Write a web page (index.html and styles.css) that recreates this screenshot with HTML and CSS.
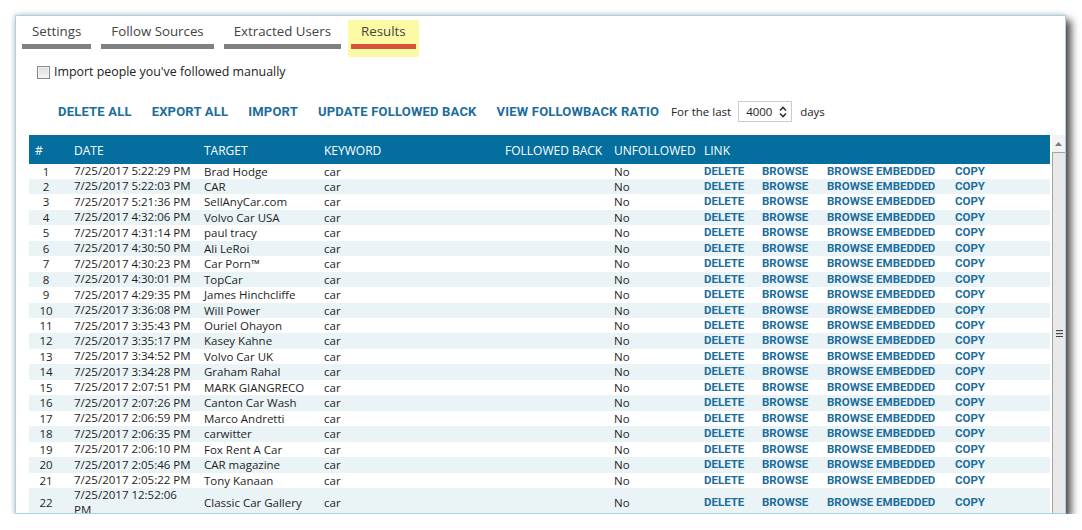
FILE: index.html
```html
<!DOCTYPE html>
<html>
<head>
<meta charset="utf-8">
<link rel="stylesheet" href="styles.css">
</head>
<body>
<div class="window">
  <div class="tabs">
    <div class="tab"><span class="tab-label">Settings</span><span class="tab-bar"></span></div>
    <div class="tab"><span class="tab-label">Follow Sources</span><span class="tab-bar"></span></div>
    <div class="tab"><span class="tab-label">Extracted Users</span><span class="tab-bar"></span></div>
    <div class="tab active"><span class="tab-label">Results</span><span class="tab-bar"></span></div>
  </div>
  <label class="option"><span class="checkbox"></span>Import people you've followed manually</label>
  <div class="toolbar">
    <span class="action">Delete All</span>
    <span class="action">Export All</span>
    <span class="action">Import</span>
    <span class="action">Update Followed Back</span>
    <span class="action last">View Followback Ratio</span>
    <span class="label">For the last</span>
    <span class="spin"><span class="spin-value">4000</span><svg class="spin-arrows" width="8" height="14" viewBox="0 0 8 14"><path d="M1 5.5 L4 2.5 L7 5.5" fill="none" stroke="#333" stroke-width="1.6"/><path d="M1 8.5 L4 11.5 L7 8.5" fill="none" stroke="#333" stroke-width="1.6"/></svg></span>
    <span class="label">days</span>
  </div>
  <div class="grid-area">
    <div class="table-wrap">
      <table class="results">
        <colgroup>
          <col class="c-num"><col class="c-date"><col class="c-target"><col class="c-keyword"><col class="c-fb"><col class="c-unf"><col class="c-del"><col class="c-browse"><col class="c-emb"><col class="c-copy">
        </colgroup>
        <thead>
          <tr><th class="h-num">#</th><th>DATE</th><th>TARGET</th><th>KEYWORD</th><th>FOLLOWED BACK</th><th>UNFOLLOWED</th><th>LINK</th><th></th><th></th><th></th></tr>
        </thead>
        <tbody>
          <tr><td class="num">1</td><td class="date">7/25/2017 5:22:29 PM</td><td>Brad Hodge</td><td>car</td><td></td><td>No</td><td class="lk">DELETE</td><td class="lk">BROWSE</td><td class="lk">BROWSE EMBEDDED</td><td class="lk">COPY</td></tr>
          <tr><td class="num">2</td><td class="date">7/25/2017 5:22:03 PM</td><td>CAR</td><td>car</td><td></td><td>No</td><td class="lk">DELETE</td><td class="lk">BROWSE</td><td class="lk">BROWSE EMBEDDED</td><td class="lk">COPY</td></tr>
          <tr><td class="num">3</td><td class="date">7/25/2017 5:21:36 PM</td><td>SellAnyCar.com</td><td>car</td><td></td><td>No</td><td class="lk">DELETE</td><td class="lk">BROWSE</td><td class="lk">BROWSE EMBEDDED</td><td class="lk">COPY</td></tr>
          <tr><td class="num">4</td><td class="date">7/25/2017 4:32:06 PM</td><td>Volvo Car USA</td><td>car</td><td></td><td>No</td><td class="lk">DELETE</td><td class="lk">BROWSE</td><td class="lk">BROWSE EMBEDDED</td><td class="lk">COPY</td></tr>
          <tr><td class="num">5</td><td class="date">7/25/2017 4:31:14 PM</td><td>paul tracy</td><td>car</td><td></td><td>No</td><td class="lk">DELETE</td><td class="lk">BROWSE</td><td class="lk">BROWSE EMBEDDED</td><td class="lk">COPY</td></tr>
          <tr><td class="num">6</td><td class="date">7/25/2017 4:30:50 PM</td><td>Ali LeRoi</td><td>car</td><td></td><td>No</td><td class="lk">DELETE</td><td class="lk">BROWSE</td><td class="lk">BROWSE EMBEDDED</td><td class="lk">COPY</td></tr>
          <tr><td class="num">7</td><td class="date">7/25/2017 4:30:23 PM</td><td>Car Porn™</td><td>car</td><td></td><td>No</td><td class="lk">DELETE</td><td class="lk">BROWSE</td><td class="lk">BROWSE EMBEDDED</td><td class="lk">COPY</td></tr>
          <tr><td class="num">8</td><td class="date">7/25/2017 4:30:01 PM</td><td>TopCar</td><td>car</td><td></td><td>No</td><td class="lk">DELETE</td><td class="lk">BROWSE</td><td class="lk">BROWSE EMBEDDED</td><td class="lk">COPY</td></tr>
          <tr><td class="num">9</td><td class="date">7/25/2017 4:29:35 PM</td><td>James Hinchcliffe</td><td>car</td><td></td><td>No</td><td class="lk">DELETE</td><td class="lk">BROWSE</td><td class="lk">BROWSE EMBEDDED</td><td class="lk">COPY</td></tr>
          <tr><td class="num">10</td><td class="date">7/25/2017 3:36:08 PM</td><td>Will Power</td><td>car</td><td></td><td>No</td><td class="lk">DELETE</td><td class="lk">BROWSE</td><td class="lk">BROWSE EMBEDDED</td><td class="lk">COPY</td></tr>
          <tr><td class="num">11</td><td class="date">7/25/2017 3:35:43 PM</td><td>Ouriel Ohayon</td><td>car</td><td></td><td>No</td><td class="lk">DELETE</td><td class="lk">BROWSE</td><td class="lk">BROWSE EMBEDDED</td><td class="lk">COPY</td></tr>
          <tr><td class="num">12</td><td class="date">7/25/2017 3:35:17 PM</td><td>Kasey Kahne</td><td>car</td><td></td><td>No</td><td class="lk">DELETE</td><td class="lk">BROWSE</td><td class="lk">BROWSE EMBEDDED</td><td class="lk">COPY</td></tr>
          <tr><td class="num">13</td><td class="date">7/25/2017 3:34:52 PM</td><td>Volvo Car UK</td><td>car</td><td></td><td>No</td><td class="lk">DELETE</td><td class="lk">BROWSE</td><td class="lk">BROWSE EMBEDDED</td><td class="lk">COPY</td></tr>
          <tr><td class="num">14</td><td class="date">7/25/2017 3:34:28 PM</td><td>Graham Rahal</td><td>car</td><td></td><td>No</td><td class="lk">DELETE</td><td class="lk">BROWSE</td><td class="lk">BROWSE EMBEDDED</td><td class="lk">COPY</td></tr>
          <tr><td class="num">15</td><td class="date">7/25/2017 2:07:51 PM</td><td>MARK GIANGRECO</td><td>car</td><td></td><td>No</td><td class="lk">DELETE</td><td class="lk">BROWSE</td><td class="lk">BROWSE EMBEDDED</td><td class="lk">COPY</td></tr>
          <tr><td class="num">16</td><td class="date">7/25/2017 2:07:26 PM</td><td>Canton Car Wash</td><td>car</td><td></td><td>No</td><td class="lk">DELETE</td><td class="lk">BROWSE</td><td class="lk">BROWSE EMBEDDED</td><td class="lk">COPY</td></tr>
          <tr><td class="num">17</td><td class="date">7/25/2017 2:06:59 PM</td><td>Marco Andretti</td><td>car</td><td></td><td>No</td><td class="lk">DELETE</td><td class="lk">BROWSE</td><td class="lk">BROWSE EMBEDDED</td><td class="lk">COPY</td></tr>
          <tr><td class="num">18</td><td class="date">7/25/2017 2:06:35 PM</td><td>carwitter</td><td>car</td><td></td><td>No</td><td class="lk">DELETE</td><td class="lk">BROWSE</td><td class="lk">BROWSE EMBEDDED</td><td class="lk">COPY</td></tr>
          <tr><td class="num">19</td><td class="date">7/25/2017 2:06:10 PM</td><td>Fox Rent A Car</td><td>car</td><td></td><td>No</td><td class="lk">DELETE</td><td class="lk">BROWSE</td><td class="lk">BROWSE EMBEDDED</td><td class="lk">COPY</td></tr>
          <tr><td class="num">20</td><td class="date">7/25/2017 2:05:46 PM</td><td>CAR magazine</td><td>car</td><td></td><td>No</td><td class="lk">DELETE</td><td class="lk">BROWSE</td><td class="lk">BROWSE EMBEDDED</td><td class="lk">COPY</td></tr>
          <tr><td class="num">21</td><td class="date">7/25/2017 2:05:22 PM</td><td>Tony Kanaan</td><td>car</td><td></td><td>No</td><td class="lk">DELETE</td><td class="lk">BROWSE</td><td class="lk">BROWSE EMBEDDED</td><td class="lk">COPY</td></tr>
          <tr><td class="num">22</td><td class="date">7/25/2017 12:52:06 PM</td><td>Classic Car Gallery</td><td>car</td><td></td><td>No</td><td class="lk">DELETE</td><td class="lk">BROWSE</td><td class="lk">BROWSE EMBEDDED</td><td class="lk">COPY</td></tr>
        </tbody>
      </table>
    </div>
    <div class="scrollbar">
      <div class="sb-arrow"><svg width="7" height="4" viewBox="0 0 7 4"><path d="M0 4 L3.5 0 L7 4 Z" fill="#7a7a7a"/></svg></div>
      <div class="sb-thumb"><span class="grip"></span></div>
    </div>
  </div>
</div>
</body>
</html>
```

FILE: styles.css
```css
body {
  margin: 0;
  background: #ffffff;
  font-family: "Open Sans", "Noto Sans", sans-serif;
}

.window {
  margin: 15px 0 0 15px;
  width: 1051px;
  height: 499px;
  box-sizing: border-box;
  border: 1px solid #a6d3e8;
  background: #ffffff;
  box-shadow: 5px 5px 8px rgba(0, 0, 0, 0.72), -1px -1px 5px rgba(0, 0, 0, 0.14);
  overflow: hidden;
  display: flex;
  flex-direction: column;
}

/* Tabs */
.tabs {
  display: flex;
  gap: 4px;
  margin: 4px 0 0 3px;
}

.tab {
  display: flex;
  flex-direction: column;
  padding: 1px 3px 8px;
}

.tab-label {
  padding: 0 10px;
  font-size: 13.3px;
  line-height: 20px;
  color: #444444;
  text-align: center;
  white-space: nowrap;
}

.tab-bar {
  height: 5px;
  margin-top: 3px;
  background: #808080;
}

.tab.active {
  background: #fdfaa6;
}

.tab.active .tab-bar {
  background: #d9533a;
}

/* Option row */
.option {
  display: flex;
  align-items: center;
  gap: 4px;
  margin: 7px 0 0 21px;
  font-size: 12.4px;
  line-height: 16px;
  color: #222222;
}

.checkbox {
  width: 11px;
  height: 11px;
  border: 1px solid #8a8a8a;
  background: linear-gradient(#dcdcdc, #f6f6f6);
  box-shadow: inset 0 0 0 1px #f2f2f2;
}

/* Toolbar */
.toolbar {
  display: flex;
  align-items: center;
  height: 21px;
  margin: 21px 0 0 42px;
}

.action {
  font-family: Roboto, "Liberation Sans", sans-serif;
  font-weight: 700;
  font-size: 13px;
  letter-spacing: 0.2px;
  color: #1b6d9c;
  text-transform: uppercase;
  margin-right: 20px;
  white-space: nowrap;
}

.action.last {
  margin-right: 12px;
}

.label {
  font-size: 11.5px;
  color: #222222;
}

.spin {
  display: flex;
  align-items: center;
  justify-content: space-between;
  box-sizing: border-box;
  width: 54px;
  height: 21px;
  margin: 0 8px 0 7px;
  padding: 0 4px 0 7px;
  border: 1px solid #cccccc;
  font-size: 11.5px;
  color: #222222;
}

/* Table area */
.grid-area {
  display: flex;
  flex: 1;
  min-height: 0;
  margin-top: 13px;
  padding-left: 13px;
  gap: 2px;
}

.table-wrap {
  flex: 1;
  overflow: hidden;
}

.results {
  width: 100%;
  border-collapse: collapse;
  border-spacing: 0;
  table-layout: fixed;
}

.c-num { width: 45px; }
.c-date { width: 130px; }
.c-target { width: 120px; }
.c-keyword { width: 181px; }
.c-fb { width: 109px; }
.c-unf { width: 90px; }
.c-del { width: 58px; }
.c-browse { width: 65px; }
.c-emb { width: 128px; }

.results th {
  height: 28.5px;
  padding: 3px 0 0;
  box-sizing: border-box;
  background: #046f9e;
  color: #ffffff;
  font-weight: 400;
  font-size: 12px;
  text-align: left;
  white-space: nowrap;
}

.results th.h-num {
  padding-left: 6px;
}

.results td {
  height: 15.45px;
  padding: 0;
  font-size: 11.5px;
  line-height: 15.45px;
  color: #1e1e1e;
  white-space: nowrap;
  vertical-align: middle;
}

.results tbody tr:nth-child(even) td {
  background: #eaf3f6;
}

.results td.num {
  text-align: center;
  padding-right: 11px;
}

.results td.date {
  white-space: normal;
  padding-right: 10px;
  line-height: 14.5px;
}

.results td.lk {
  font-family: Roboto, "Liberation Sans", sans-serif;
  font-weight: 700;
  font-size: 11.5px;
  color: #1b6d9c;
}

/* Scrollbar */
.scrollbar {
  width: 13px;
  display: flex;
  flex-direction: column;
  background: #f3f3f3;
}

.sb-arrow {
  height: 17px;
  display: flex;
  align-items: center;
  justify-content: center;
}

.sb-thumb {
  flex: 1;
  display: flex;
  align-items: center;
  justify-content: center;
  border-left: 1px solid #a3a3a3;
  border-top: 1px solid #a3a3a3;
  background: #e9e9e9;
}

.grip {
  width: 7px;
  height: 7px;
  background: repeating-linear-gradient(#444444 0 1px, #d0d0d0 1px 2px, #e9e9e9 2px 3px);
}
```
